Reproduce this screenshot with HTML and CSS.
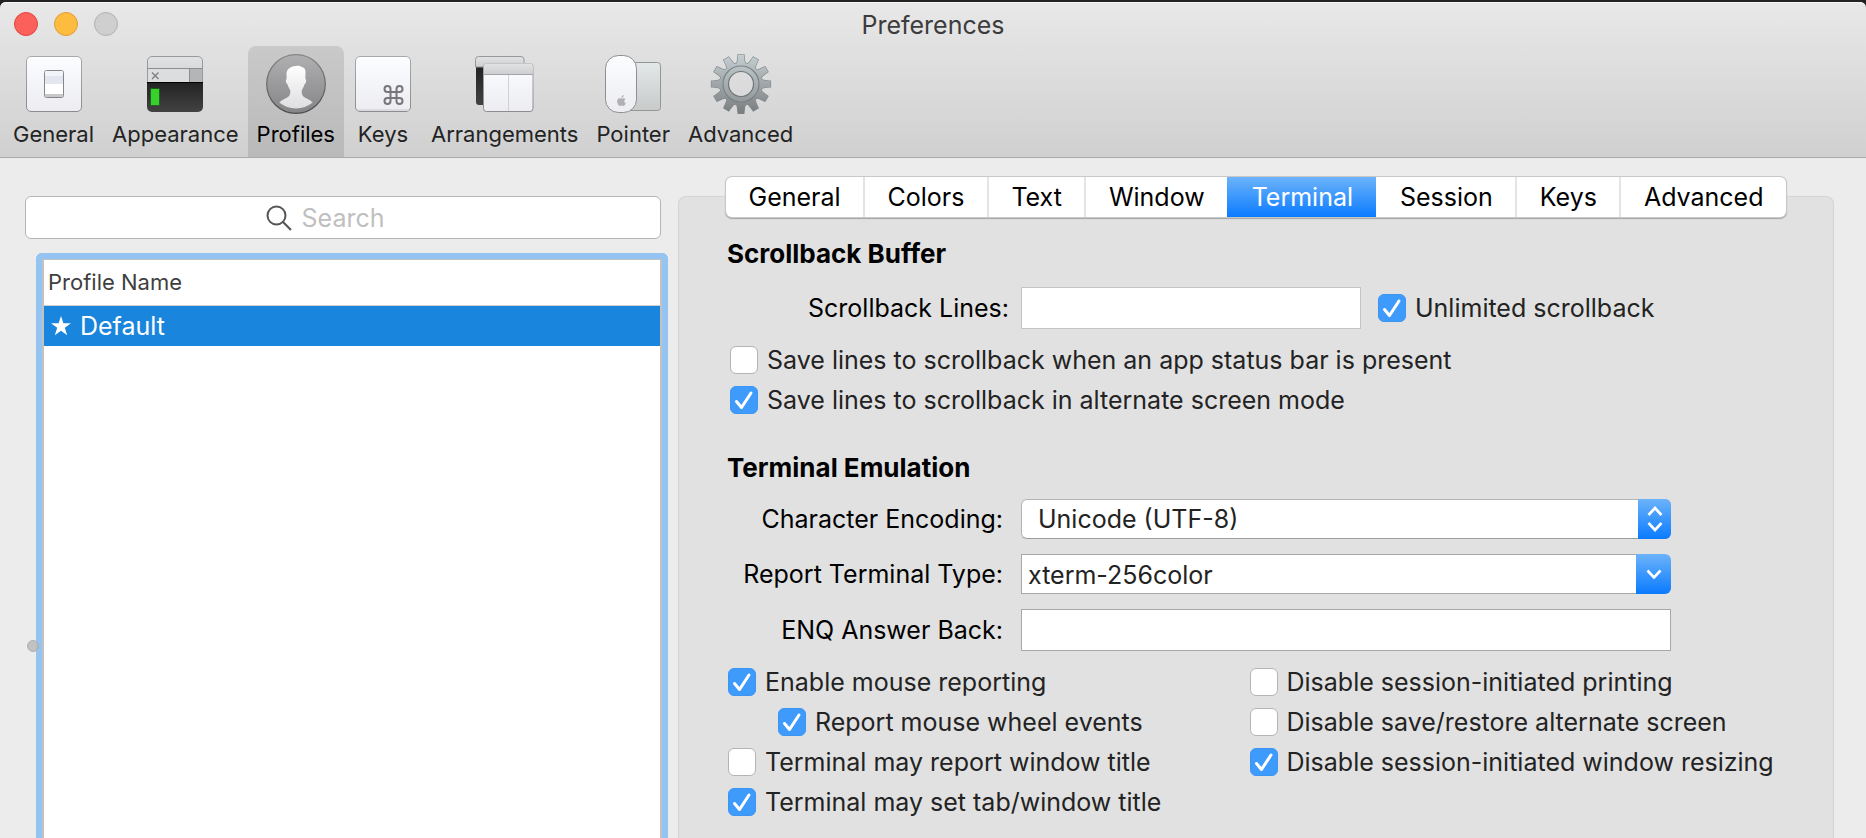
FILE: index.html
```html
<!DOCTYPE html>
<html lang="en">
<head>
<meta charset="utf-8">
<title>Preferences</title>
<link rel="stylesheet" href="styles.css">
</head>
<body>
<div class="window">
  <header class="chrome">
    <div class="titlebar">
      <div class="lights">
        <button class="light light-close" aria-label="Close"></button>
        <button class="light light-minimize" aria-label="Minimize"></button>
        <button class="light light-zoom" aria-label="Zoom" disabled></button>
      </div>
      <h1 class="title">Preferences</h1>
    </div>
    <nav class="toolbar" aria-label="Preference sections">
      <button class="tool">
        <svg class="tool-icon" viewBox="0 0 60 60" aria-hidden="true">
          <defs>
            <linearGradient id="plate" x1="0" y1="0" x2="0" y2="1"><stop offset="0" stop-color="#fbfdff"/><stop offset="1" stop-color="#ececf1"/></linearGradient>
            <linearGradient id="edge" x1="0" y1="0" x2="0" y2="1"><stop offset="0" stop-color="#a9a9ab"/><stop offset="1" stop-color="#8b8b90"/></linearGradient>
            <linearGradient id="bar" x1="0" y1="0" x2="0" y2="1"><stop offset="0" stop-color="#e2e3e5"/><stop offset="1" stop-color="#cdced0"/></linearGradient>
            <linearGradient id="dark" x1="0" y1="0" x2="0" y2="1"><stop offset="0" stop-color="#222"/><stop offset="1" stop-color="#424242"/></linearGradient>
          </defs>
          <rect x="2.5" y="2.5" width="55" height="55" rx="4.5" fill="url(#plate)" stroke="url(#edge)"/>
          <rect x="20.5" y="16.5" width="19" height="27" rx="2" fill="#fff" stroke="#85858a"/>
          <rect x="21" y="17" width="18" height="13" rx="1.5" fill="#e3e6ee"/>
          <rect x="21" y="17" width="18" height="5" rx="1.5" fill="#f2f4f9"/>
          <rect x="21" y="40" width="18" height="3" fill="#c6c9c6"/>
        </svg>
        <span>General</span>
      </button>
      <button class="tool">
        <svg class="tool-icon" viewBox="0 0 60 60" aria-hidden="true">
          <path d="M2.5 28V7a4.500 4.500 0 0 1 4.500-4.500h46A4.500 4.500 0 0 1 57.500 7v21z" fill="url(#bar)" stroke="#9a9a9c"/>
          <rect x="3" y="15" width="41" height="13" fill="#dcdddf"/>
          <rect x="44" y="15" width="13" height="13" fill="#b4b5b7"/>
          <path d="M2 14.500h56M44.500 15v13" stroke="#8c8d8f" fill="none"/>
          <path d="M7 18.500l6.500 6.500M13.500 18.500L7 25" stroke="#7d7d7f" stroke-width="1.300"/>
          <path d="M2 28h56v25a5 5 0 0 1-5 5H7a5 5 0 0 1-5-5z" fill="url(#dark)"/>
          <path d="M2 28.500h56" stroke="#000"/>
          <rect x="5" y="34" width="10" height="18" fill="#1b8d15" opacity=".45"/>
          <rect x="6" y="35" width="8" height="16" fill="#36d22b"/>
        </svg>
        <span>Appearance</span>
      </button>
      <button class="tool tool-selected" aria-current="page">
        <svg class="tool-icon" viewBox="0 0 60 60" aria-hidden="true">
          <defs>
            <linearGradient id="disc" x1="0" y1="0" x2="0" y2="1"><stop offset="0" stop-color="#b0b0b2"/><stop offset="1" stop-color="#858587"/></linearGradient>
            <linearGradient id="ring" x1="0" y1="0" x2="0" y2="1"><stop offset="0" stop-color="#858585"/><stop offset="1" stop-color="#4c4c4c"/></linearGradient>
            <linearGradient id="bust" x1="0" y1="0" x2="0" y2="1"><stop offset="0" stop-color="#fff"/><stop offset="1" stop-color="#dedee1"/></linearGradient>
          </defs>
          <circle cx="30" cy="30" r="29.300" fill="url(#disc)" stroke="url(#ring)" stroke-width="1.200"/>
          <path d="M30 12c2.500-.6 5 .2 6.200 1.300C39 13.700 39.800 16.500 39.500 20c-.1 1.800-.2 3.200-.1 5 1 .4.900 2.200.3 3.800-.4 1.300-1 1.700-1.400 1.800-.6 2.600-1.600 4.300-2.500 5.600-.3 3 .2 5.200 2.200 6.800 2.800 2 6.500 2.900 8.600 5.600A26 26 0 0 1 30 54.500a26 26 0 0 1-16.600-5.900c2.100-2.700 5.800-3.600 8.600-5.600 2-1.600 2.500-3.800 2.200-6.800-.9-1.300-1.900-3-2.500-5.600-.4-.1-1-.5-1.400-1.800-.6-1.600-.7-3.400.3-3.800.1-1.800 0-3.200-.1-5 0-4.500 3.500-7.600 9.500-8z" fill="url(#bust)"/>
        </svg>
        <span>Profiles</span>
      </button>
      <button class="tool">
        <svg class="tool-icon" viewBox="0 0 60 60" aria-hidden="true">
          <rect x="2.500" y="2.500" width="55" height="55" rx="4.500" fill="url(#plate)" stroke="url(#edge)"/>
          <path d="M4 56h52" stroke="#c9c9ce"/>
          <g transform="translate(28.500 29)"><path d="M15 6v12a3 3 0 1 0 3-3H6a3 3 0 1 0 3 3V6a3 3 0 1 0-3 3h12a3 3 0 1 0-3-3" fill="none" stroke="#77777a" stroke-width="2"/></g>
        </svg>
        <span>Keys</span>
      </button>
      <button class="tool">
        <svg class="tool-icon" viewBox="0 0 60 60" aria-hidden="true">
          <path d="M1 13h14v38H4a3 3 0 0 1-3-3z" fill="url(#dark)"/>
          <path d="M.5 13V5.500a3 3 0 0 1 3-3H46a3 3 0 0 1 3 3V13z" fill="url(#bar)" stroke="#98989a"/>
          <rect x="8.500" y="9.500" width="49.500" height="48" rx="3" fill="url(#plate)" stroke="url(#edge)"/>
          <path d="M9 20.500V12a2.500 2.500 0 0 1 2.500-2.500H55a2.500 2.500 0 0 1 2.500 2.500v8.500z" fill="url(#bar)"/>
          <path d="M9 20.500h49" stroke="#a3a4a6"/>
          <path d="M33.500 21v36" stroke="#d0d1d5"/>
        </svg>
        <span>Arrangements</span>
      </button>
      <button class="tool">
        <svg class="tool-icon" viewBox="0 0 60 60" aria-hidden="true">
          <defs>
            <linearGradient id="pad" x1="0" y1="0" x2="0" y2="1"><stop offset="0" stop-color="#e3e8e8"/><stop offset="1" stop-color="#c8caca"/></linearGradient>
          </defs>
          <rect x="14" y="8.500" width="43.500" height="48" rx="3" fill="url(#pad)" stroke="#939596"/>
          <rect x="2.500" y="1.500" width="31" height="57" rx="13" fill="url(#plate)" stroke="#8e8e92"/>
          <path d="M18.700 44.500c.7 0 1.500-.5 2.300-.2 .6.100 1.100.4 1.400.9-1.700 1.100-1.400 3.300.3 4.100-.5 1.400-1.500 2.700-2.400 2.700-.6 0-1-.4-1.700-.4s-1.100.4-1.700.4c-1.700-.2-3.400-4.400-2.400-6.300.5-1.100 1.500-1.500 2.400-1.500.7 0 1.300.3 1.800.3zM18.500 43.900c0-1.400.9-2.500 2.200-2.800.1 1.500-.9 2.700-2.200 2.800z" fill="#b0b0b3"/>
        </svg>
        <span>Pointer</span>
      </button>
      <button class="tool">
        <svg class="tool-icon" viewBox="-30 -30 60 60" aria-hidden="true">
          <defs>
            <linearGradient id="steel" gradientUnits="userSpaceOnUse" x1="0" y1="-30" x2="0" y2="30"><stop offset="0" stop-color="#c6d0d4"/><stop offset="1" stop-color="#797c7e"/></linearGradient>
            <linearGradient id="steel2" gradientUnits="userSpaceOnUse" x1="0" y1="-18" x2="0" y2="18"><stop offset="0" stop-color="#b9c3c6"/><stop offset="1" stop-color="#94999b"/></linearGradient>
            <path id="tooth" d="M-4.500-20C-3.500-22-3.300-25-2.900-29.500H2.900C3.300-25 3.500-22 4.500-20z"/>
            <clipPath id="teeth">
              <use href="#tooth"/><use href="#tooth" transform="rotate(30)"/><use href="#tooth" transform="rotate(60)"/><use href="#tooth" transform="rotate(90)"/><use href="#tooth" transform="rotate(120)"/><use href="#tooth" transform="rotate(150)"/><use href="#tooth" transform="rotate(180)"/><use href="#tooth" transform="rotate(210)"/><use href="#tooth" transform="rotate(240)"/><use href="#tooth" transform="rotate(270)"/><use href="#tooth" transform="rotate(300)"/><use href="#tooth" transform="rotate(330)"/>
            </clipPath>
          </defs>
          <g fill="none" stroke="#7f8587" stroke-width="1.200">
            <use href="#tooth"/><use href="#tooth" transform="rotate(30)"/><use href="#tooth" transform="rotate(60)"/><use href="#tooth" transform="rotate(90)"/><use href="#tooth" transform="rotate(120)"/><use href="#tooth" transform="rotate(150)"/><use href="#tooth" transform="rotate(180)"/><use href="#tooth" transform="rotate(210)"/><use href="#tooth" transform="rotate(240)"/><use href="#tooth" transform="rotate(270)"/><use href="#tooth" transform="rotate(300)"/><use href="#tooth" transform="rotate(330)"/>
          </g>
          <circle r="21.500" fill="none" stroke="#7f8587"/>
          <rect x="-30" y="-30" width="60" height="60" fill="url(#steel)" clip-path="url(#teeth)"/>
          <circle r="17" fill="none" stroke="url(#steel)" stroke-width="8.500"/>
          <circle r="15.500" fill="none" stroke="url(#steel2)" stroke-width="6"/>
          <circle r="18" fill="none" stroke="#7b8284" stroke-width="1.200"/>
          <circle r="12.500" fill="none" stroke="#6f7678" stroke-width="1.200"/>
        </svg>
        <span>Advanced</span>
      </button>
    </nav>
  </header>

  <main class="content">
    <aside class="sidebar">
      <label class="search">
        <svg class="search-icon" viewBox="0 0 26 26" aria-hidden="true"><circle cx="10.500" cy="10.500" r="9" fill="none" stroke="#555" stroke-width="2"/><path d="M17 17l8 8" stroke="#555" stroke-width="2.200"/></svg>
        <input class="search-input" type="search" placeholder="Search" aria-label="Search profiles">
      </label>
      <div class="profiles">
        <table class="profile-table">
          <thead><tr><th scope="col">Profile Name</th></tr></thead>
          <tbody><tr class="row-selected"><td><span class="profile-cell"><svg class="star" viewBox="0 0 20 20" aria-hidden="true"><path d="M10 0l2.400 7.300H20l-6.200 4.500 2.400 7.400L10 14.700l-6.200 4.500 2.400-7.400L0 7.300h7.600z" fill="#fff"/></svg>Default</span></td></tr></tbody>
        </table>
        <span class="split-handle"></span>
      </div>
    </aside>

    <section class="panel">
      <div class="tabs" role="tablist">
        <button class="tab" role="tab">General</button>
        <button class="tab" role="tab">Colors</button>
        <button class="tab" role="tab">Text</button>
        <button class="tab" role="tab">Window</button>
        <button class="tab tab-active" role="tab" aria-selected="true">Terminal</button>
        <button class="tab" role="tab">Session</button>
        <button class="tab" role="tab">Keys</button>
        <button class="tab" role="tab">Advanced</button>
      </div>

      <div class="settings">
        <h2 class="heading">Scrollback Buffer</h2>
        <div class="scroll-row">
          <label class="field-label" for="lines">Scrollback Lines:</label>
          <input class="field field-light" id="lines" type="text">
          <label class="check"><input type="checkbox" checked>Unlimited scrollback</label>
        </div>
        <div class="checks checks-scroll">
          <label class="check"><input type="checkbox">Save lines to scrollback when an app status bar is present</label>
          <label class="check"><input type="checkbox" checked>Save lines to scrollback in alternate screen mode</label>
        </div>

        <h2 class="heading">Terminal Emulation</h2>
        <div class="form">
          <label class="field-label" for="encoding">Character Encoding:</label>
          <div class="popup">
            <select class="popup-select" id="encoding"><option>Unicode (UTF-8)</option></select>
            <span class="popup-cap"><svg width="16" height="26" viewBox="0 0 16 26" aria-hidden="true"><path d="M1.500 9L8 2l6.500 7M1.500 17L8 24l6.500-7" fill="none" stroke="#fff" stroke-width="2.600"/></svg></span>
          </div>
          <label class="field-label" for="termtype">Report Terminal Type:</label>
          <div class="combo">
            <input class="combo-input" id="termtype" type="text" value="xterm-256color">
            <button class="combo-button" aria-label="Show terminal types"><svg width="16" height="10" viewBox="0 0 16 10" aria-hidden="true"><path d="M1.500 1.500L8 8.500l6.500-7" fill="none" stroke="#fff" stroke-width="2.600"/></svg></button>
          </div>
          <label class="field-label" for="enq">ENQ Answer Back:</label>
          <input class="field" id="enq" type="text">
        </div>

        <div class="columns">
          <div class="checks">
            <label class="check"><input type="checkbox" checked>Enable mouse reporting</label>
            <label class="check check-nested"><input type="checkbox" checked>Report mouse wheel events</label>
            <label class="check"><input type="checkbox">Terminal may report window title</label>
            <label class="check"><input type="checkbox" checked>Terminal may set tab/window title</label>
          </div>
          <div class="checks">
            <label class="check"><input type="checkbox">Disable session-initiated printing</label>
            <label class="check"><input type="checkbox">Disable save/restore alternate screen</label>
            <label class="check"><input type="checkbox" checked>Disable session-initiated window resizing</label>
          </div>
        </div>
      </div>
    </section>
  </main>
</div>
</body>
</html>
```
FILE: styles.css
```css
* { box-sizing: border-box; }

body {
  margin: 0;
  background: #232122;
  color: #000;
  font: 25px/28px Inter, "Liberation Sans", sans-serif;
}

button, input, select {
  margin: 0;
  padding: 0;
  border: 0;
  border-radius: 0;
  background: none;
  color: inherit;
  font: inherit;
}

.window {
  display: flex;
  flex-direction: column;
  min-height: 100vh;
  border-top: 2px solid #232122;
}

/* Title bar and toolbar */
.chrome {
  border-bottom: 1px solid #a9a9a9;
  border-radius: 6px 6px 0 0;
  background: linear-gradient(#e8e8e8, #d0d0d0);
  box-shadow: inset 0 1px #f6f6f6;
}

.titlebar {
  display: grid;
  grid-template-columns: 1fr auto 1fr;
  align-items: center;
  height: 44px;
  padding: 0 14px;
}

.lights { display: flex; gap: 16px; }

.light {
  width: 24px;
  height: 24px;
  border: 1px solid;
  border-radius: 50%;
}
.light-close { background: #fc605b; border-color: #e2443f; }
.light-minimize { background: #fdbc40; border-color: #e09e34; }
.light-zoom { background: #cfcfcf; border-color: #b2b2b2; }

.title {
  margin: 0;
  padding-top: 2px;
  color: #3c3c3c;
  font-size: 25px;
  font-weight: 400;
}

.toolbar {
  display: flex;
  padding-left: 4px;
}

.tool {
  display: flex;
  flex-direction: column;
  align-items: center;
  gap: 6px;
  padding: 8px 9px 9px;
  border-radius: 8px 8px 0 0;
  color: #232323;
  font-size: 22px;
}
.tool-selected { background: linear-gradient(#c9c9c9, #b9b9b9); color: #000; }
.tool-icon { width: 60px; height: 60px; overflow: visible; }

/* Main area */
.content {
  display: grid;
  flex: 1;
  grid-template-columns: 643fr 1156fr;
  gap: 10px;
  padding: 38px 32px 0 25px;
  background: #ececec;
}

.sidebar { display: flex; flex-direction: column; }

.search {
  display: flex;
  align-items: center;
  justify-content: center;
  gap: 10px;
  height: 43px;
  margin-right: 7px;
  padding-right: 36px;
  border: 1px solid #b5b5b5;
  border-radius: 6px;
  background: #fff;
}
.search-icon { width: 26px; height: 26px; }
.search-input {
  field-sizing: content;
  outline: 0;
  appearance: none;
}
.search-input::placeholder { color: #bfbfbf; opacity: 1; }

.profiles {
  position: relative;
  flex: 1;
  margin: 14px 0 0 11px;
  border: 6px solid #96c4f0;
  border-bottom: 0;
  border-radius: 6px 6px 0 0;
  background: #fff;
  box-shadow: inset 2px 1px #c2c2c2, inset -2px 0 #c2c2c2;
  padding: 1px 2px 0;
}
.profile-table { width: 100%; border-collapse: collapse; }
.profile-table th {
  height: 45px;
  padding: 0 4px;
  border-bottom: 1px solid #cfcfcf;
  color: #3f3f3f;
  font-size: 22px;
  font-weight: 400;
  text-align: left;
}
.profile-table td { height: 41px; padding: 0 7px; color: #fff; }
.row-selected { background: #1a85dc; }
.profile-cell { display: flex; align-items: center; gap: 9px; }
.star { width: 20px; height: 20px; }

.split-handle {
  position: absolute;
  top: 381px;
  left: -15px;
  width: 12px;
  height: 12px;
  border: 1px solid #a9a9a9;
  border-radius: 50%;
  background: #bdbdbd;
  opacity: .9;
}

.panel {
  border: 1px solid #d4d4d4;
  border-bottom: 0;
  border-radius: 8px 8px 0 0;
  background: #e1e1e1;
}

.tabs {
  display: flex;
  height: 40px;
  margin: -20px 47px 0;
  border-radius: 6px;
  background: #fff;
  box-shadow: 0 0 0 1px #c8c8c8, 0 1px 1px 1px #a5a5a5;
}
.tab { flex: 1 1 auto; }
.tab + .tab { border-left: 2px solid #e4e4e4; }
.tabs .tab-active { border-color: transparent; }
.tab-active {
  background: linear-gradient(#6cb3fa, #0a7bff) border-box;
  color: #fff;
}
.tabs .tab-active + .tab { border-color: transparent; }

.settings { padding: 23px 0 10px 48px; }

.heading {
  margin: 0;
  font-size: 26px;
  font-weight: 700;
}

.field-label { text-align: right; white-space: nowrap; }

.field, .combo-input {
  min-width: 0;
  border: 1px solid #a8a8a8;
  background: #fff;
}
.field { height: 42px; padding: 0 6px; }
.field-light { border-color: #c4c4c4; }

.scroll-row {
  display: grid;
  grid-template-columns: 282px 340px auto;
  align-items: center;
  gap: 0 12px;
  margin: 19px 0 17px;
}
.scroll-row .check { margin-left: 5px; }

.checks { display: flex; flex-direction: column; gap: 12px; }
.checks-scroll { margin: 0 0 40px 3px; }

.check {
  display: flex;
  align-items: center;
  gap: 9px;
  color: #232323;
  white-space: nowrap;
}
.check-nested { margin-left: 50px; }
.check input {
  flex: none;
  width: 28px;
  height: 28px;
  border: 1px solid #b4b4b4;
  border-radius: 6px;
  background: #fff;
  appearance: none;
}
.check input:checked {
  border-color: #3b95f5;
  background: #3f9bfb url("data:image/svg+xml,%3Csvg xmlns='http://www.w3.org/2000/svg' viewBox='0 0 28 28'%3E%3Cpath d='M6.500 15.500l5 6L21 7' fill='none' stroke='%23fff' stroke-width='3' stroke-linecap='round' stroke-linejoin='round'/%3E%3C/svg%3E") center / 28px 28px;
}

.form {
  display: grid;
  grid-template-columns: 276px 1fr;
  align-items: center;
  gap: 15px 18px;
  margin: 17px 162px 17px 0;
}

.popup { display: grid; }
.popup-select, .popup-cap { grid-area: 1 / 1; }
.popup-select {
  height: 40px;
  padding: 0 48px 0 16px;
  border: 1px solid #b4b4b4;
  border-bottom-color: #9c9c9c;
  border-radius: 6px;
  background: #fff;
  color: #232323;
  appearance: none;
}
.popup-cap {
  display: flex;
  align-items: center;
  justify-content: center;
  justify-self: end;
  width: 33px;
  border-radius: 0 6px 6px 0;
  background: linear-gradient(#6cb3fa, #0a7bff);
  pointer-events: none;
}

.combo { display: flex; height: 40px; }
.combo-input { flex: 1; padding: 2px 6px 0; border-right: 0; color: #232323; }
.combo-button {
  display: flex;
  align-items: center;
  justify-content: center;
  width: 35px;
  border-radius: 0 6px 6px 0;
  background: linear-gradient(#6cb3fa, #0a7bff);
}

.columns {
  display: grid;
  grid-template-columns: 522fr 584fr;
  padding-left: 1px;
}
```
